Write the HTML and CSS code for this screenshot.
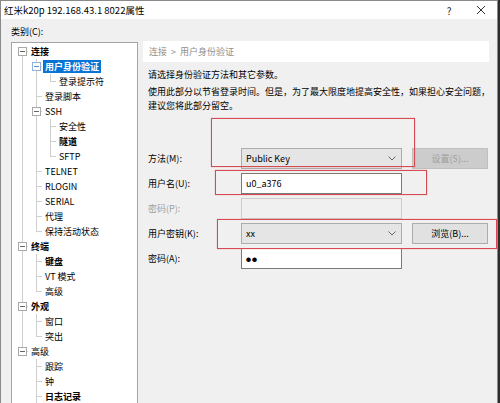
FILE: index.html
```html
<!DOCTYPE html>
<html lang="zh-CN">
<head>
<meta charset="utf-8">
<title>属性</title>
<link rel="stylesheet" href="styles.css">
</head>
<body>
<div class="window">
  <div class="titlebar">
    <span class="title">红米k20p 192.168.43.1 8022属性</span>
    <span class="tb-btn help">?</span>
    <span class="tb-btn close"><svg width="10" height="10" viewBox="0 0 10 10"><path d="M1 1L9 9M9 1L1 9" stroke="#333" stroke-width="1" fill="none"/></svg></span>
  </div>
  <div class="content">
    <div class="cat-label">类别(C):</div>
    <div class="main">
      <div class="tree">
        <ul class="tv root">
          <li>
            <div class="row"><span class="tg"></span><span class="lb b">连接</span></div>
            <ul>
              <li>
                <div class="row"><span class="tg blue"></span><span class="lb b sel">用户身份验证</span></div>
                <ul>
                  <li><div class="row"><span class="lb">登录提示符</span></div></li>
                </ul>
              </li>
              <li><div class="row"><span class="lb">登录脚本</span></div></li>
              <li>
                <div class="row"><span class="tg"></span><span class="lb">SSH</span></div>
                <ul>
                  <li><div class="row"><span class="lb">安全性</span></div></li>
                  <li><div class="row"><span class="lb b">隧道</span></div></li>
                  <li><div class="row"><span class="lb">SFTP</span></div></li>
                </ul>
              </li>
              <li><div class="row"><span class="lb">TELNET</span></div></li>
              <li><div class="row"><span class="lb">RLOGIN</span></div></li>
              <li><div class="row"><span class="lb">SERIAL</span></div></li>
              <li><div class="row"><span class="lb">代理</span></div></li>
              <li><div class="row"><span class="lb">保持活动状态</span></div></li>
            </ul>
          </li>
          <li>
            <div class="row"><span class="tg"></span><span class="lb b">终端</span></div>
            <ul>
              <li><div class="row"><span class="lb b">键盘</span></div></li>
              <li><div class="row"><span class="lb">VT 模式</span></div></li>
              <li><div class="row"><span class="lb">高级</span></div></li>
            </ul>
          </li>
          <li>
            <div class="row"><span class="tg"></span><span class="lb b">外观</span></div>
            <ul>
              <li><div class="row"><span class="lb">窗口</span></div></li>
              <li><div class="row"><span class="lb">突出</span></div></li>
            </ul>
          </li>
          <li>
            <div class="row"><span class="tg"></span><span class="lb">高级</span></div>
            <ul>
              <li><div class="row"><span class="lb">跟踪</span></div></li>
              <li><div class="row"><span class="lb">钟</span></div></li>
              <li><div class="row"><span class="lb b">日志记录</span></div></li>
              <li><div class="row"><span class="lb">文件传输</span></div></li>
            </ul>
          </li>
        </ul>
      </div>
      <div class="panel">
        <div class="crumb">连接&nbsp;&nbsp;&gt;&nbsp;&nbsp;用户身份验证</div>
        <p class="p1">请选择身份验证方法和其它参数。</p>
        <p class="p2">使用此部分以节省登录时间。但是，为了最大限度地提高安全性，如果担心安全问题，<br>建议您将此部分留空。</p>
        <div class="form">
          <span class="lab">方法(M):</span>
          <div class="combo"><span>Public Key</span><svg width="8" height="5" viewBox="0 0 8 5"><path d="M0.5 0.5L4 4L7.5 0.5" stroke="#666" stroke-width="1" fill="none"/></svg></div>
          <div class="btn disabled">设置(S)...</div>

          <span class="lab">用户名(U):</span>
          <div class="input">u0_a376</div>
          <span></span>

          <span class="lab dis">密码(P):</span>
          <div class="input off"></div>
          <span></span>

          <span class="lab">用户密钥(K):</span>
          <div class="combo"><span>xx</span><svg width="8" height="5" viewBox="0 0 8 5"><path d="M0.5 0.5L4 4L7.5 0.5" stroke="#666" stroke-width="1" fill="none"/></svg></div>
          <div class="btn">浏览(B)...</div>

          <span class="lab">密码(A):</span>
          <div class="input dots">●●</div>
          <span></span>
        </div>
      </div>
    </div>
  </div>
  <div class="mark m1"></div>
  <div class="mark m2"></div>
  <div class="mark m3"></div>
</div>
</body>
</html>
```
FILE: styles.css
```css
* { box-sizing: border-box; }
html, body {
  margin: 0;
  padding: 0;
  width: 500px;
  height: 403px;
  overflow: hidden;
  background: #2e2e2e;
}
body {
  font-family: "Noto Sans CJK SC", "Noto Sans", sans-serif;
  font-size: 9px;
  color: #000;
}
.window {
  position: relative;
  width: 498px;
  height: 403px;
  border: 1px solid #8a8a8a;
  border-bottom: none;
  background: #f0f0f0;
  overflow: hidden;
}
.titlebar {
  height: 18px;
  background: #fff;
  display: flex;
  align-items: center;
  padding-left: 3px;
}
.title {
  flex: 1;
  font-size: 9.5px;
  white-space: nowrap;
}
.tb-btn {
  height: 18px;
  display: flex;
  align-items: center;
  justify-content: center;
  color: #222;
}
.help { width: 30px; font-size: 10px; }
.close { width: 33px; }

.content {
  padding: 6px 0 0 10px;
}
.cat-label {
  height: 14px;
  line-height: 14px;
  margin-bottom: 2px;
}
.main {
  display: flex;
  gap: 5px;
}
.tree {
  width: 127px;
  height: 380px;
  margin-top: 1px;
  background: #fff;
  border: 1px solid #a5a5a5;
  padding-top: 1px;
  overflow: hidden;
}
.tv, .tv ul {
  list-style: none;
  margin: 0;
  padding: 0;
}
.tv ul { padding-left: 14px; }
.tv li { position: relative; }
.tv li::after {
  content: "";
  position: absolute;
  left: 10px;
  top: 0;
  bottom: 0;
  border-left: 1px solid #cfcfcf;
}
.tv li:last-child::after {
  bottom: auto;
  height: 8px;
}
.root > li:first-child::after { top: 7px; }
.tv li::before {
  content: "";
  position: absolute;
  left: 11px;
  top: 7px;
  width: 5px;
  border-top: 1px solid #cfcfcf;
}
.row {
  position: relative;
  height: 15px;
  display: flex;
  align-items: center;
  padding-left: 17px;
}
.tg {
  position: absolute;
  left: 6px;
  top: 3px;
  width: 9px;
  height: 9px;
  border: 1px solid #a9a9a9;
  background: #fff;
  z-index: 2;
}
.tg.blue { border-color: #8fb2dc; }
.tg::after {
  content: "";
  position: absolute;
  left: 1px;
  top: 3px;
  width: 5px;
  height: 1px;
  background: #666;
}
.tg.blue::after { background: #5f8fc8; }
.lb {
  height: 13px;
  line-height: 13px;
  padding: 0 2px;
  white-space: nowrap;
}
.b { font-weight: 700; }
.sel {
  background: #0a74d5;
  color: #fff;
}

.panel {
  width: 346px;
  display: flex;
  flex-direction: column;
}
.crumb {
  height: 21px;
  line-height: 21px;
  background: #fff;
  padding-left: 6px;
  color: #8e8e8e;
}
.panel p {
  margin: 0;
  padding-left: 5px;
  line-height: 14px;
  white-space: nowrap;
}
.p1 { margin-top: 6px !important; }
.p2 { margin-top: 3px !important; }

.form {
  margin-top: 35px;
  padding-left: 5px;
  display: grid;
  grid-template-columns: 83px 161px 76px;
  grid-auto-rows: 21px;
  column-gap: 10px;
  row-gap: 4px;
  align-items: center;
}
.lab { white-space: nowrap; }
.lab.dis { color: #a0a0a0; }
.combo {
  height: 21px;
  background: #e5e5e5;
  border: 1px solid #acacac;
  display: flex;
  align-items: center;
  justify-content: space-between;
  padding: 0 5px 0 4px;
}
.input {
  height: 21px;
  background: #fff;
  border: 1px solid #7a7a7a;
  display: flex;
  align-items: center;
  padding-left: 4px;
}
.input.off {
  background: #f0f0f0;
  border-color: #cccccc;
}
.input.dots {
  font-size: 5px;
  letter-spacing: 1px;
}
.btn {
  height: 21px;
  background: #e1e1e1;
  border: 1px solid #adadad;
  display: flex;
  align-items: center;
  justify-content: center;
}
.btn.disabled {
  background: #cccccc;
  border-color: #bfbfbf;
  color: #a0a0a0;
}

.mark {
  position: absolute;
  border: 1px solid #d64b52;
  box-shadow: 0 0 1px rgba(214, 75, 82, 0.6);
}
.m1 { left: 210px; top: 117px; width: 204px; height: 49px; }
.m2 { left: 214px; top: 169px; width: 212px; height: 25px; }
.m3 { left: 216px; top: 218px; width: 280px; height: 30px; }
```
